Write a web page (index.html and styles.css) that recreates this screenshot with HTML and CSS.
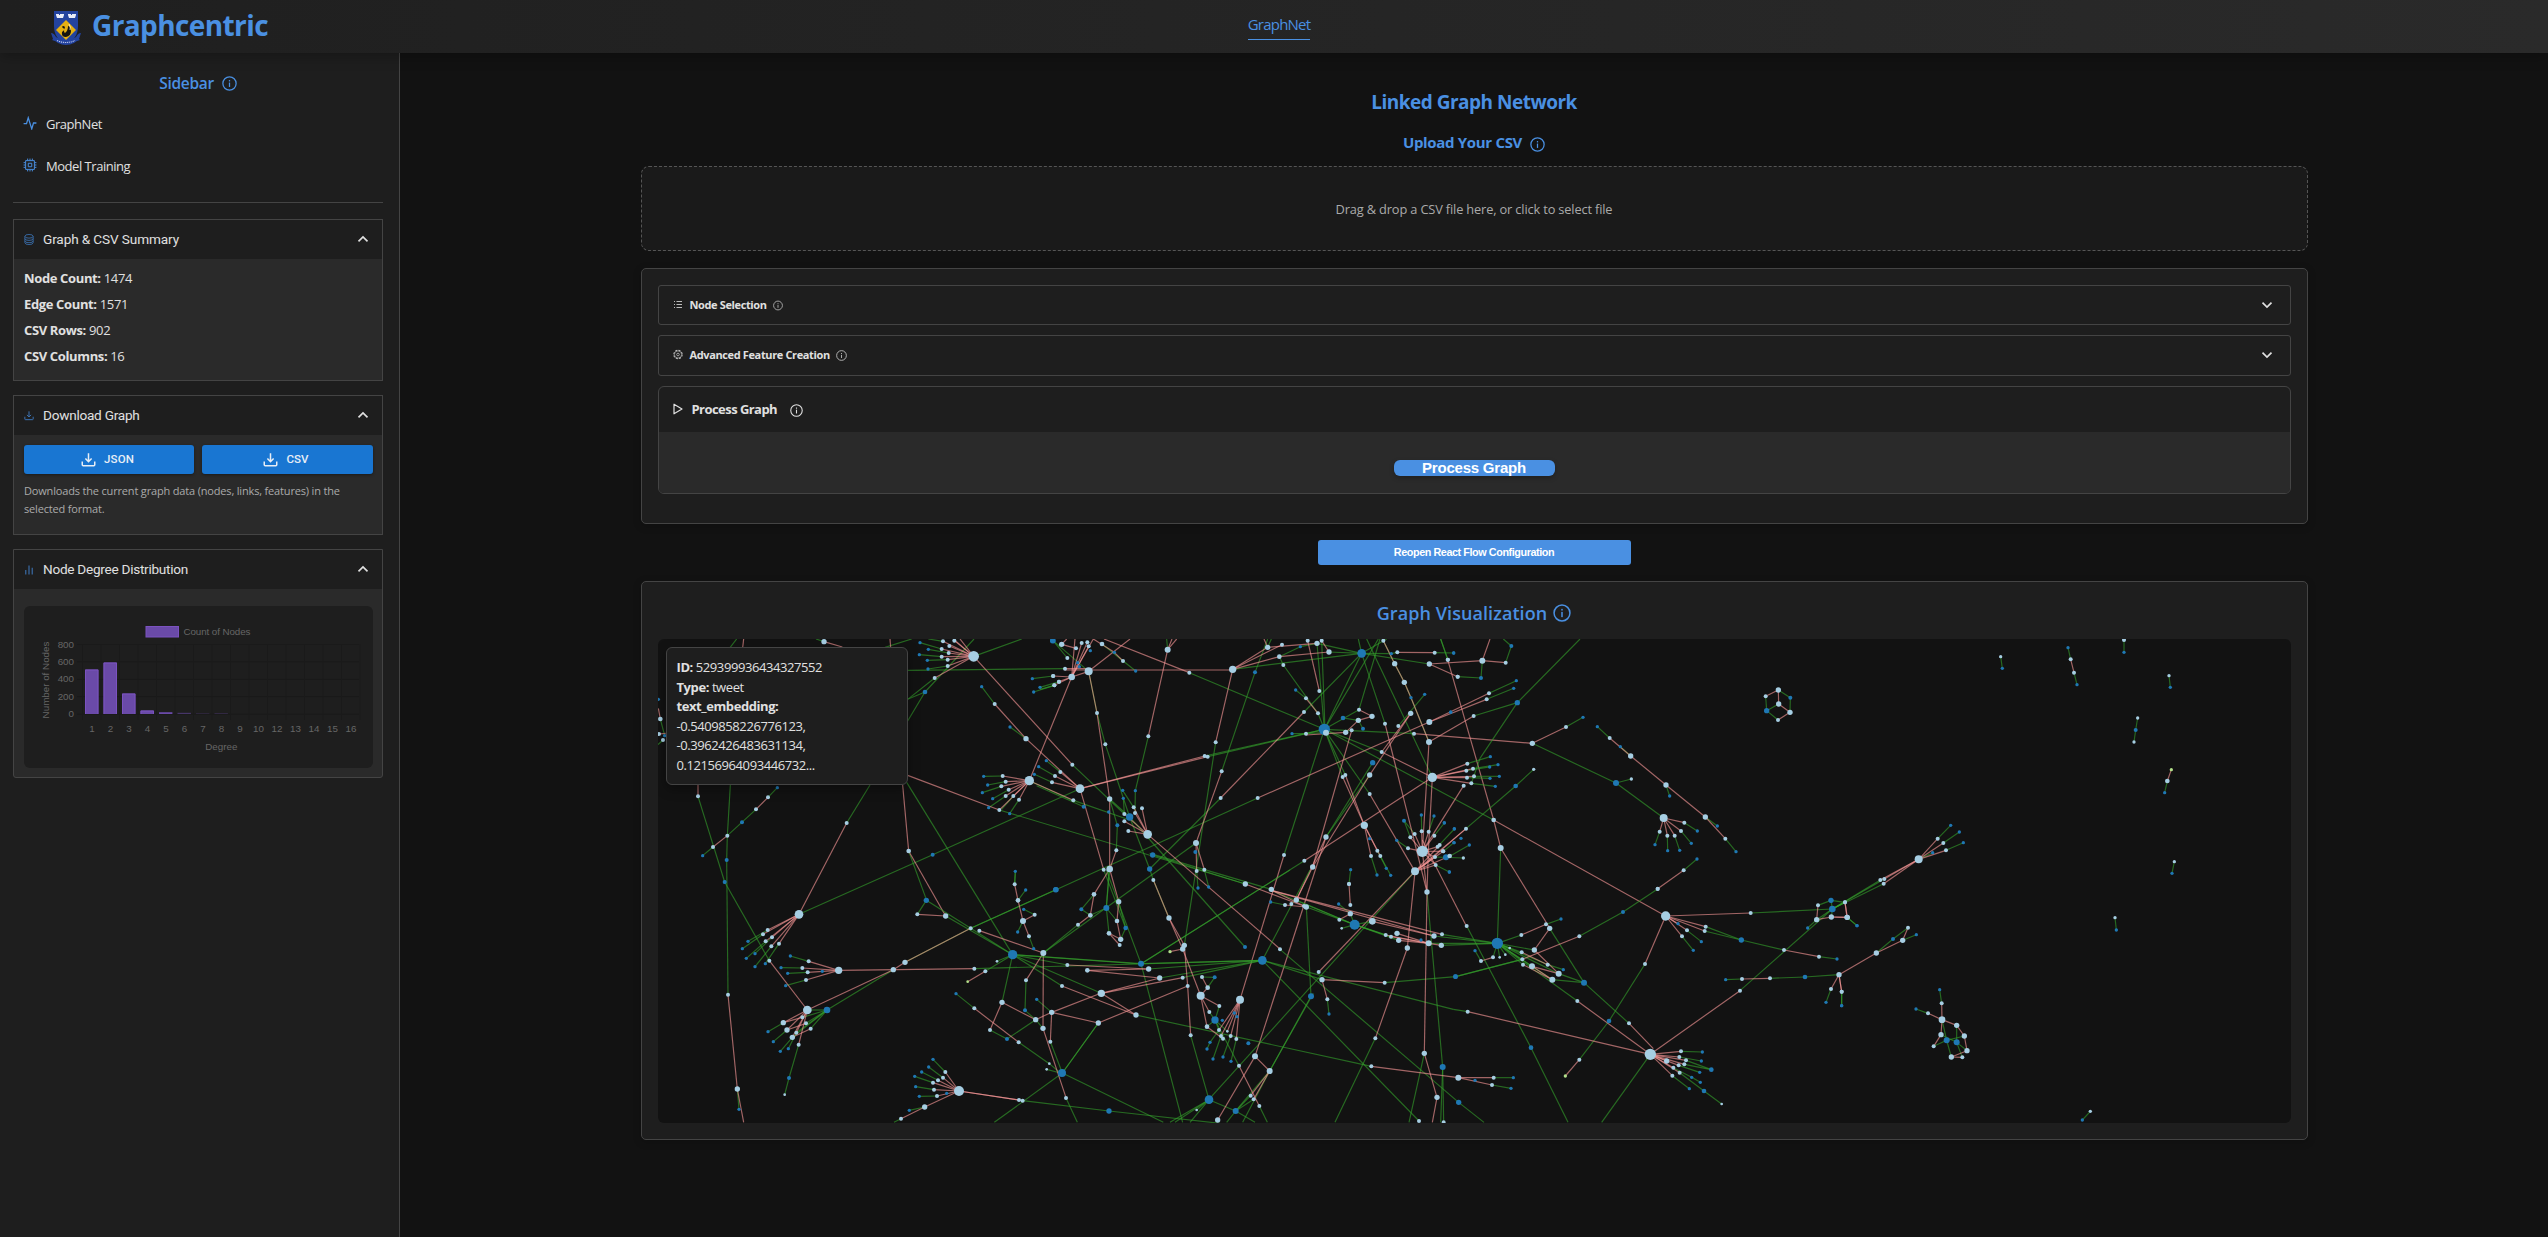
FILE: index.html
```html
<!DOCTYPE html>
<html lang="en">
<head>
<meta charset="utf-8">
<title>Graphcentric</title>
<link rel="stylesheet" href="styles.css">
</head>
<body>
<svg class="defs" aria-hidden="true">
  <symbol id="info" viewBox="0 0 24 24"><circle cx="12" cy="12" r="10.6" fill="none" stroke="currentColor" stroke-width="2"/><rect x="11" y="10.5" width="2" height="7" fill="currentColor"/><rect x="11" y="6.5" width="2" height="2.2" fill="currentColor"/></symbol>
  <symbol id="up" viewBox="0 0 12 8"><path d="M1.5 6.3 6 2l4.500 4.300" fill="none" stroke="currentColor" stroke-width="1.700"/></symbol>
  <symbol id="down" viewBox="0 0 12 8"><path d="M1.500 1.700 6 6l4.500-4.300" fill="none" stroke="currentColor" stroke-width="1.700"/></symbol>
  <symbol id="download" viewBox="0 0 24 24"><path d="M12 2v13M7 10.500l5 5 5-5M2 15v5.500q0 1.500 1.500 1.500h17q1.500 0 1.500-1.500V15" fill="none" stroke="currentColor" stroke-width="2.400"/></symbol>
</svg>
<header class="topbar">
  <div class="brand">
    <svg class="crest" viewBox="0 0 30 35">
      <path d="M3 1h24v15q0 13-12 18Q3 29 3 16z" fill="#23439f"/>
      <path d="M5 4h3v1h1V4h4v1l-1 3H6L5 5zM17 4h3v1h1V4h4v1l-1 3h-6l-1-3z" fill="#e8ecf8"/>
      <path d="M0 23q3 0 5 4 10 7 20 0 2-4 5-4l-2 6 1 1q-4 1-6 3-8 4-16 0-2-2-6-3l1-1z" fill="#23439f"/>
      <path d="M15 10 25 20 15 30 5 20z" fill="#e5b011"/>
      <path d="M14 17q-2-2-3 0l1 1q3 1-1 4-1 5 4 5 5-1 5-6-1-5-3-5 0 5-3 7-2-1 0-6z" fill="#15150f"/>
      <path d="M18 14q2 3 1 6" stroke="#fff" stroke-width=".7" fill="none"/>
      <path d="M6 30.500q9 4 18 0" stroke="#b9c4ea" stroke-width="1.100" stroke-dasharray="1.200 .8" fill="none"/>
    </svg>
    <span class="brand-name">Graphcentric</span>
  </div>
  <a class="nav-link">GraphNet</a>
</header>
<div class="layout">
  <aside class="sidebar">
    <h2 class="side-title"><span>Sidebar</span><svg class="i15"><use href="#info"/></svg></h2>
    <nav class="side-nav">
      <a><svg class="i14" viewBox="0 0 24 24"><path d="M1 13h5L9 3l6 19 3-10h5" fill="none" stroke="currentColor" stroke-width="2.200"/></svg><span>GraphNet</span></a>
      <a><svg class="i14" viewBox="0 0 24 24"><path d="M4.500 4.500h15v15h-15zM9 9h6v6H9zM8 1v3M12 1v3M16 1v3M8 20v3M12 20v3M16 20v3M1 8h3M1 12h3M1 16h3M20 8h3M20 12h3M20 16h3" fill="none" stroke="currentColor" stroke-width="1.700"/></svg><span>Model Training</span></a>
    </nav>
    <hr class="rule">
    <section class="card">
      <div class="card-head"><svg class="i10" viewBox="0 0 20 24"><path d="M1 5v14q0 4 9 4t9-4V5M1 10q0 4 9 4t9-4M1 15q0 4 9 4t9-4M1 5q0-4 9-4t9 4-9 4-9-4z" fill="none" stroke="currentColor" stroke-width="1.800"/></svg><span class="t-summary">Graph &amp; CSV Summary</span><svg class="chev"><use href="#up"/></svg></div>
      <div class="card-body stats">
        <p><b>Node Count:</b> 1474</p><p><b>Edge Count:</b> 1571</p><p><b>CSV Rows:</b> 902</p><p><b>CSV Columns:</b> 16</p>
      </div>
    </section>
    <section class="card">
      <div class="card-head"><svg class="i10"><use href="#download"/></svg><span class="t-download">Download Graph</span><svg class="chev"><use href="#up"/></svg></div>
      <div class="card-body downloads">
        <div class="btn-row">
          <button class="btn"><svg class="i15"><use href="#download"/></svg>JSON</button>
          <button class="btn"><svg class="i15"><use href="#download"/></svg>CSV</button>
        </div>
        <p class="hint">Downloads the current graph data (nodes, links, features) in the<br>selected format.</p>
      </div>
    </section>
    <section class="card degree">
      <div class="card-head"><svg class="i10" viewBox="0 0 20 24"><path d="M3 23V13M10 23V3M17 23V8" stroke="currentColor" stroke-width="2.400"/></svg><span class="t-degree">Node Degree Distribution</span><svg class="chev"><use href="#up"/></svg></div>
      <div class="card-body chart-body">
        <svg class="chart" id="chart" viewBox="24 606 349 162"></svg>
      </div>
    </section>
  </aside>
  <main class="main">
    <h1 class="page-title">Linked Graph Network</h1>
    <h3 class="upload-title"><span>Upload Your CSV</span><svg class="i15"><use href="#info"/></svg></h3>
    <div class="dropzone">Drag &amp; drop a CSV file here, or click to select file</div>
    <section class="panel config">
      <div class="fold"><svg class="i9" viewBox="0 0 18 18"><path d="M1 3h2M1 9h2M1 15h2M6 3h11M6 9h11M6 15h11" stroke="currentColor" stroke-width="2.400"/></svg><span class="t-node">Node Selection</span><svg class="i10 info"><use href="#info"/></svg><svg class="chev"><use href="#down"/></svg></div>
      <div class="fold"><svg class="i11" viewBox="0 0 24 24"><circle cx="12" cy="12" r="10" fill="none" stroke="currentColor" stroke-width="2.600" stroke-dasharray="5 2.850"/><circle cx="12" cy="12" r="8.600" fill="none" stroke="currentColor" stroke-width="1.400"/><circle cx="12" cy="12" r="3.200" fill="none" stroke="currentColor" stroke-width="1.900"/></svg><span class="t-adv">Advanced Feature Creation</span><svg class="i11 info"><use href="#info"/></svg><svg class="chev"><use href="#down"/></svg></div>
      <div class="process">
        <div class="process-head"><svg class="play" viewBox="0 0 10 12"><path d="M1 1.200v9.600L9 6z" fill="none" stroke="currentColor" stroke-width="1.200" stroke-linejoin="round"/></svg><span>Process Graph</span><svg class="i13"><use href="#info"/></svg></div>
        <div class="process-body"><button class="process-btn">Process Graph</button></div>
      </div>
    </section>
    <button class="reopen">Reopen React Flow Configuration</button>
    <section class="panel viz">
      <h3 class="viz-title"><span>Graph Visualization</span><svg class="i18"><use href="#info"/></svg></h3>
      <div class="canvas">
        <svg id="network" viewBox="54 57 4899 1452"></svg>
        <div class="tooltip">
          <p><b>ID:</b> 529399936434327552</p><p><b>Type:</b> tweet</p><p><b>text_embedding:</b></p><p>-0.5409858226776123,</p><p>-0.3962426483631134,</p><p>0.12156964093446732...</p>
        </div>
      </div>
    </section>
  </main>
</div>
<script src="graph.js"></script>
</body>
</html>
```
FILE: styles.css
```css
* { box-sizing: border-box; }
body { margin: 0; height: 1237px; overflow: hidden; background: #121212; color: #e0e0e0; font-family: "Open Sans", "Noto Sans", sans-serif; display: flex; flex-direction: column; }
p, h1, h2, h3 { margin: 0; }
svg { display: block; flex: none; }
button { border: 0; padding: 0; font-family: inherit; }
.defs { position: absolute; width: 0; height: 0; }
.i9 { width: 9px; height: 9px; }
.i10 { width: 10px; height: 11px; }
.i11 { width: 11px; height: 11px; }
.i13 { width: 13px; height: 13px; }
.i14 { width: 14px; height: 14px; }
.i15 { width: 15px; height: 15px; }
.i18 { width: 18px; height: 18px; }
.chev { width: 12px; height: 8px; margin-left: auto; }

.topbar { position: relative; z-index: 2; height: 53px; flex: none; display: grid; grid-template-columns: 1fr auto 1fr; background: linear-gradient(90deg, #1f1f1f, #2a2a2a); box-shadow: 0 4px 12px rgba(0, 0, 0, .25); }
.brand { display: flex; align-items: center; gap: 11px; padding-left: 51px; }
.crest { width: 30px; height: 35px; margin-top: 2px; }
.brand-name { font-size: 28px; font-weight: 700; color: #4a90e2; letter-spacing: -.6px; line-height: 40px; padding-bottom: 3px; }
.nav-link { height: 40px; margin-left: 10px; padding-top: 13px; color: #4a90e2; font-size: 15px; line-height: 22px; letter-spacing: -.78px; border-bottom: 1px solid #4a90e2; }

.layout { flex: 1; display: grid; grid-template-columns: 400px 1fr; }
.sidebar { background: #1e1e1e; border-right: 1px solid #444; padding: 18px 16px 0 13px; }
.side-title { display: flex; justify-content: center; align-items: center; gap: 8px; height: 24px; font-size: 15.500px; font-weight: 600; color: #4a90e2; letter-spacing: -.3px; }
.side-nav { padding: 8px 0 0 10px; }
.side-nav a { display: flex; align-items: center; gap: 9px; height: 42px; font-size: 13px; letter-spacing: -.47px; }
.side-nav svg { color: #4a90e2; margin-top: -2px; }
.rule { margin: 15px 0 16px; border: 0; border-top: 1px solid #444; }
.card { border: 1px solid #444; margin-bottom: 14px; background: #2a2a2a; }
.card-head { height: 39px; display: flex; align-items: center; gap: 9px; padding: 0 13px 1px 10px; background: #1e1e1e; font-family: Roboto, sans-serif; font-size: 13.600px; }
.card-head > svg:first-child { color: #3c72b2; }
.t-summary { letter-spacing: -.12px; }
.t-download { letter-spacing: -.25px; }
.t-degree { letter-spacing: -.27px; }
.stats { height: 121px; padding: 6px 10px; font-size: 13px; line-height: 26px; letter-spacing: -.36px; }
.downloads { height: 99px; padding: 10px 9px 0 10px; }
.btn-row { display: grid; grid-template-columns: 170px 171px; gap: 8px; }
.btn { height: 29px; padding: 0 3px 2px 0; display: flex; align-items: center; justify-content: center; gap: 8px; background: #1976d2; color: #e8eef6; border-radius: 3px; font: 500 11.500px Roboto, sans-serif; letter-spacing: .1px; box-shadow: 0 1px 3px rgba(0, 0, 0, .4); }
.btn svg { margin-top: 2px; }
.hint { margin-top: 8px; color: #aaa; font-size: 11px; line-height: 18px; letter-spacing: -.17px; }
.degree { border-radius: 0 0 3px 3px; }
.chart-body { height: 188px; padding: 17px 9px 9px 10px; }
.chart { width: 349px; height: 162px; background: #1e1e1e; border-radius: 6px; font: 9.800px "Liberation Sans", sans-serif; }
.chart text { fill: #666; }

.main { display: flex; flex-direction: column; align-items: center; padding-top: 34px; }
.page-title { height: 30px; font-size: 19px; line-height: 30px; letter-spacing: -.5px; color: #4a90e2; }
.upload-title { display: flex; align-items: center; gap: 8px; height: 22px; margin-top: 14px; font-size: 15px; letter-spacing: -.32px; color: #4a90e2; }
.upload-title svg { margin-top: 4px; }
.dropzone { width: 1667px; height: 85px; margin-top: 13px; display: grid; place-items: center; border: 1px dashed #555; border-radius: 8px; background: #1a1a1a; color: #aaa; font-size: 12.800px; letter-spacing: -.15px; }
.panel { width: 1667px; border: 1px solid #444; border-radius: 5px; background: #1e1e1e; padding: 16px; box-shadow: 0 2px 8px rgba(0, 0, 0, .2); }
.config { height: 256px; margin-top: 17px; display: flex; flex-direction: column; gap: 10px; }
.fold { height: 40.250px; display: flex; align-items: center; padding: 0 17px 1px 14px; border: 1px solid #444; border-radius: 3px; font-size: 11px; font-weight: 700; letter-spacing: -.37px; }
.fold > svg:first-child { margin-right: 7px; width: 10px; color: #bbb; }
.fold .info { margin: 2px 0 0 6px; color: #bbb; }
.process { border: 1px solid #444; border-radius: 6px; overflow: hidden; }
.process-head { height: 45px; display: flex; align-items: center; padding-left: 14px; font-size: 13px; font-weight: 700; letter-spacing: -.55px; }
.process-head .play { width: 10px; height: 12px; margin-right: 9px; }
.process-head .i13 { margin: 3px 0 0 13px; }
.process-body { height: 61px; padding-top: 28px; background: #2a2a2a; text-align: center; }
.process-btn { display: block; margin: 0 auto; width: 161px; height: 16px; border-radius: 6px; background: #4a90e2; color: #fff; font: 700 15px/16px "Liberation Sans", sans-serif; letter-spacing: -.22px; box-shadow: 0 2px 5px rgba(0, 0, 0, .25); }
.reopen { width: 313px; height: 25px; margin-top: 16px; padding-bottom: 1px; border-radius: 3px; background: #4a90e2; color: #fff; font: 700 10.800px "Liberation Sans", sans-serif; letter-spacing: -.42px; }
.viz { height: 559px; margin-top: 16px; }
.viz-title { height: 29px; margin: 0 0 12px; display: flex; justify-content: center; align-items: center; gap: 6px; font-size: 18px; font-weight: 600; letter-spacing: .08px; color: #4a90e2; }
.canvas { position: relative; width: 1633px; height: 484px; border-radius: 6px; overflow: hidden; background: #121212; }
#network { width: 1633px; height: 484px; }
.tooltip { position: absolute; left: 8px; top: 8px; width: 242px; height: 138px; padding: 10px; background: #1e1e1e; border: 1px solid #444; border-radius: 6px; font-size: 13px; line-height: 19.600px; letter-spacing: -.42px; box-shadow: 0 4px 12px rgba(0, 0, 0, .35); }
.edge { stroke-width: 3.500; stroke-opacity: .62; }
.g { stroke: #33a02c; }
.p { stroke: #fb9a99; }
.l { fill: #a6cee3; }
.b { fill: #1f78b4; }
.y { fill: #b2df8a; }
```
FILE: graph.js
```javascript
const NS = 'http://www.w3.org/2000/svg';
function add(parent, tag, attrs, text) {
  const el = document.createElementNS(NS, tag);
  for (const k in attrs) el.setAttribute(k, attrs[k]);
  if (text !== undefined) el.textContent = text;
  parent.appendChild(el);
}

// Regions of the network. Edges are polylines "x,y x,y"; nodes are "x,y[,radius]".
// "fans" start with a hub that connects to every following point.
const regions = [
{ at: [0, 0],
  g: `290,57 270,83|528,57 552,65|735,82 815,57|803,151 1276,146|803,238 884,174|803,238 855,216 1002,57|803,303 855,216|1001,109 1145,57|840,68 905,87|865,88 926,99|838,104 905,110|862,121 923,119|864,147 923,138|865,57 909,64|1177,176 1240,168|1181,216 1243,196|1200,202 1258,185|1025,200 1064,252|1110,321 1158,356|1031,469 1088,468|1043,495 1097,485|1027,518 1084,499|1058,536 1106,509|1046,563 1097,528|1109,581 1137,539|1085,568 1120,528|1078,570 1816,792|1183,463 1236,487|1196,440 1245,468|1219,422 1261,456|54,374 69,360|61,297 74,347|174,529 254,786 388,1022|412,503 384,532|348,568 262,647|219,681 188,707|271,495 262,647 260,720 264,1124|620,609 690,495|806,693 860,841|800,487 1118,1004|477,883 878,704 1320,506|1124,793 1126,754|1168,482 1300,543`,
  p: `311,57 308,83|552,65 607,81|750,57 752,82|884,174 1001,109 1297,434|1064,252 1158,356 1320,506|1168,482 1295,171|803,466 1078,570|1168,482 1300,541|174,495 174,529|384,532 348,568|262,647 219,681|620,609 477,883|788,495 806,693 917,888|55,265 61,297|57,342 77,340`,
  pf: `1001,109 909,64 943,62 928,78 905,87 926,99 905,110 923,119 923,138 940,57 960,57|1168,482 1088,468 1097,485 1084,499 1106,509 1097,528 1120,528 1137,539 1078,570|1320,506 1236,487 1245,468 1261,456`,
  l: `552,65,8 1001,109,16 909,64 943,62 928,78 905,87 926,99 905,110 923,119 923,138 884,174 1240,168 1243,196 1257,185 1064,252 1158,356,8 1168,482,14 1088,468 1097,485 1084,499 1106,509 1097,528 1120,528 1137,539 1078,570 69,360 61,297,7 57,342 174,529 219,681 384,532 348,568 262,647 620,609 806,693,7 1124,793`,
  b: `840,68 865,88 838,104 862,121 864,147 855,216,7 1177,176 1181,216 1200,202 1025,200 1110,321 1031,469 1043,495 1027,518 1058,536 1046,563 1109,581 1183,463 1196,440 1219,422 74,347 55,238 412,503 306,607,6 188,707 260,720,6 254,786,6 878,704,6 1126,754 1238,62,8` },
{ at: [1200, 0],
  g: `380,57 383,89|0,208 43,196|39,62 82,114|39,62 146,154|448,158 853,328|325,349 286,512|527,367 433,976|578,148 965,100|683,82 694,57|718,110 781,80 831,70 965,100|718,110 730,135 834,280|831,70 853,328|845,62 855,328|867,96 965,100 955,57|965,100 853,328|1015,57 853,328|1040,57 965,100 792,276|965,100 1054,101 1072,97|1184,98 1241,99|965,100 1168,132|965,100 1035,311|1020,57 957,269|980,57 1177,472|1223,119 1202,57|1030,62 1064,131 1093,187 1113,233 1167,366|767,210 798,235|542,534 329,747|468,669 10,999|653,534 48,809 -208,925|755,341 798,341|798,341 853,338|998,428 858,651|989,465 858,651|909,294 955,301|853,328 957,269|969,326 955,301|1012,692 1039,745|993,708 1011,765|1021,708 1052,766|1075,318 1154,223|793,722 303,1032|1145,634 1144,585|1166,635 1182,588|1183,647 1213,609|1111,652 1092,602 1124,642|1193,680 1243,627|1210,694 1242,668|1104,685 1070,661|1187,735 1228,756|1185,711 1270,714|1220,714 1288,675|1125,754 506,1439|97,434 253,582|100,541 269,600|171,279 196,373 269,591|209,537 232,616 229,691|209,537 269,591|281,562 248,511|285,579 286,512|253,582 250,535|269,591 329,747 340,780 387,894|269,591 615,981|338,705 616,792|329,700 694,808|545,454 645,157 683,57|470,753 474,804|493,749 506,801|209,747 199,863|191,749 257,924|927,792 932,749|131,560 -10,497|186,72 287,153|171,279 146,154`,
  p: `80,57 65,73 108,85|75,146 146,146|75,150 578,150|270,57 146,154 171,279 209,537 209,747|192,57 448,158|160,57 223,97 249,123|410,57 383,89 325,349|396,57 383,89|578,148 527,367|578,148 683,82 831,70|578,148 718,110 867,96 845,62|578,148 726,74|683,82 672,57|803,62 838,213|1072,97 1184,98|1168,132 1253,170|1168,132 1327,122|1223,119 1361,600 1382,684|1030,62 1064,131 1093,187 1113,233 1167,366|798,235 834,280|792,276 542,534|798,345 917,337|494,408 120,506|503,410 120,506|957,269 996,289 955,301 917,337|1122,341 1477,370|732,705 600,1139|858,651 769,840|858,651 645,1309|935,331 818,741 769,840|989,465 818,741|916,465 973,616|908,471 973,616|989,522 1125,754|1035,311 1161,816|1112,280 989,465|1025,396 1112,280|1168,306 653,534|1168,306 1340,238|1168,306 1347,220|1167,366 1301,288|1167,366 1147,694|1177,472 1165,694 1161,816|1177,472 793,722|1177,472 1025,396|1125,754 836,1056|1125,754 1102,984|1147,694 1161,816|1147,660 1279,918|120,506 191,749|323,643 720,987|468,669 545,454|229,691 209,747|209,747 162,823|209,747 236,844|340,780 387,894|105,57 95,171`,
  pf: `95,171 146,154 125,69 142,67 146,79 39,168 57,185 43,196 160,57|973,616 1012,692 993,708 1021,708|1147,694 1145,634 1166,635 1183,647 1124,642 1111,652 1104,685 1193,680 1210,694 1185,711 1187,735|1125,754 1187,735 1185,711 1210,694 1199,675 1229,708 1278,626|323,643 281,562 306,565 285,579 253,582 253,604 265,633|468,669 470,753 493,749`,
  gf: `853,328 494,408 503,410 732,705 908,471 916,465 989,522 1025,396 1361,600 1122,341 834,280`,
  l: `65,73,8 108,85 82,114 125,69 142,67 146,79 75,146 39,168 57,185 43,196 146,154,12 95,171,10 186,72,7 249,123 383,89,9 448,158 578,148,11 683,82,8 718,110,7 730,135 726,74 803,62 831,70,8 845,62 867,96,8 838,213 798,235 792,276 834,280 171,279 196,373 325,349 527,367 494,408 503,410 545,454 542,534 653,534 97,434 120,506,13 61,456 45,468 36,487 100,541 209,537,8 281,562 285,579 306,565 253,582 253,604 265,633 323,643,13 229,691 209,747,10 191,749 340,780 468,669,9 470,753 493,749 616,792,8 694,808,8 732,705 793,722 818,741,8 858,651,8 973,616,11 993,708 1021,708 1012,692 927,792 989,522 908,471 916,465 989,465,8 1025,396 1122,341 1075,318 1112,280,8 1035,311 957,269 996,289,8 955,301,8 917,337,8 935,331 798,341 1093,187,8 1064,131,8 1030,62 1072,97 1184,98 1168,132,8 1223,119 1253,170 1168,306,9 1167,366,9 1177,472,14 1147,694,17 1125,754,12 1145,634 1166,635 1183,647 1124,642 1111,652 1104,685 1193,680 1199,675 1210,694 1185,711 1187,735`,
  b: `39,62,8 151,92 113,128 118,140 223,97 287,153 965,100,13 781,80 645,157,6 767,210 756,341 853,328,17 909,294,7 969,326,6 998,428,8 1054,101 1113,233 1154,223 1232,276 1241,99 248,511 286,512 250,535 206,576 269,591,11 232,616,6 131,560,6 338,705,8 329,747,8 466,696,6 474,804 506,801 989,656 1011,765 1039,745 1052,766 932,749 1070,661 1092,602,6 1144,585 1182,588 1213,609 1243,627 1242,668 1228,756`,
  top: `858,338,9` },
{ at: [2400, 0],
  g: `2,57 24,119|190,57 214,78 197,128|127,122 123,174 53,170|147,220 229,182|140,238 221,205|101,288 232,248 420,57|232,248 120,415 94,490|429,292 378,321|82,431 151,410|99,446 174,434|79,452 149,441|102,469 178,469|81,473 150,475|94,490 166,499|281,448 227,498 78,626|277,370 528,489 671,594|528,489 574,477|472,320 509,354|541,380 572,408|678,495 689,528|733,608 772,633|723,633 754,670|704,647 719,691|682,647 683,692|659,635 645,674|796,591 832,618|856,656 888,695|731,751 771,717|182,684 172,970|1015,210 1051,233 1050,277|977,229 980,272 1014,300|980,272 1016,252`,
  p: `150,57 127,122 197,128|277,370 378,321|509,354 572,408 678,495 796,591 856,656|71,497 -53,694|731,751 653,806|161,600 677,888|182,684 329,924|977,229 1015,210 1016,252 1050,277 1014,300|78,626 -53,740`,
  pf: `671,594 733,608 723,633 704,647 682,647 659,635|-23,472 82,431 79,452 99,446 81,473 102,469 94,490`,
  l: `24,119 53,170 127,122,9 197,128 147,220 140,238 101,288 277,370,8 378,321 281,448,5 82,431 79,452 99,446 81,473 102,469 94,490 71,497 509,354 572,408,8 678,495,8 574,477,5 671,594,12 733,608 723,633 704,647 682,647 659,635 796,591,8 856,656 731,751 653,806 78,626 161,600,7 182,684,9 9,694 70,714,5 1015,210,8 977,229 1016,252,8 1050,277,8 1014,300`,
  b: `214,78,6 41,99 123,174,6 229,182 221,205 232,248,8 32,277 429,292 151,410 174,434 149,441 178,469 150,475 166,499 227,498,7 528,489,9 472,320 541,380 689,528 772,633 754,670 719,691 683,692 645,674 832,618 888,695 771,717 1051,233,6 980,272,8 13,608 43,626 63,655 42,668 88,675 18,712,9 28,756`,
  top: `29,708,7` },
{ at: [3600, 0],
  g: `482,110 487,145|684,83 692,118|702,158 711,194|852,60 852,97|987,167 991,202|893,294 887,330 882,366|982,483 974,518|1003,725 996,760|825,893 829,930|293,656 332,616|310,669 358,636|318,691 370,668|236,718 278,698|22,892 51,917|204,923 159,957 109,999|188,961 229,944|5,1115 5,1157|299,1109 305,1150|228,1167 264,1180|306,1199 320,1261 334,1311|281,1279 320,1261 373,1248|350,1216 350,1267 367,1312|303,1244 350,1267 381,1292|751,1474 727,1500`,
  gf: `-23,867 121,780 131,791 133,777 15,847`,
  p: `692,118 702,158|994,449 982,483|15,847 22,892 -26,891|-3,1064 109,999 188,961 204,923|-3,1064 5,1115|305,1150 306,1199|264,1180 306,1199 350,1216 373,1248 381,1292 334,1311 367,1312|306,1199 303,1244 281,1279`,
  pf: `236,718 293,656 310,669 318,691 121,780 133,777 131,791`,
  l: `482,110,5 692,118 702,158 852,60 987,167,5 893,294,5 882,366,5 982,483,7 1003,725,5 825,893,5 236,718,12 293,656 310,669 318,691 121,780 133,777 131,791 15,847 22,892,8 204,923 188,961,8 109,999,8 5,1115 305,1150 264,1180 306,1199,10 350,1216,8 303,1244,8 373,1248,8 381,1292,8 334,1311,8 367,1312 281,1279 751,1474,5`,
  b: `487,145 684,83 711,194 852,97 991,202 887,330,6 974,518 996,760 829,930 332,616 358,636 370,668 278,698 51,917 159,957,6 229,944 5,1157 299,1109 228,1167 320,1261,9 350,1267,9 727,1500`,
  y: `994,449,5` },
{ at: [0, 750],
  g: `383,180 324,214|369,193 307,236|396,202 345,251|377,214 319,265|394,229 345,290|417,221 376,281|832,133 859,91 1118,254 917,138|992,175 1247,59|1003,296 1867,271|1158,331 1155,421 1187,449 1101,507 1050,480|1190,388 1235,427|948,371 1003,415|1136,517 1228,581 1261,609 1220,598|1231,515 1267,609|1187,449 1209,475|1063,757 1267,609 1375,459|561,420 760,299|795,277 992,175|430,458 384,485|441,480 400,515|457,502 421,544|469,488 445,536|476,524 447,624 434,674|292,657 297,718|916,606 879,568|909,623 866,591|894,631 845,606|879,638 824,619|882,659 827,650|891,678 838,679|854,711 808,721|783,746 762,757|1148,692 1407,723 1740,760|1167,199 1181,236|1149,153 1133,186|1184,134 1151,118|1134,91 1157,60|506,274 451,258|487,294 423,293|503,307 443,310|498,330 437,347|1124,43 1126,4`,
  gf: `1118,254 1036,304 1071,274 1086,397 1283,285 1503,282 1266,348 1384,370|561,420 502,420 487,442 498,460 469,488 457,502 512,476`,
  p: `832,133 917,138|596,301 1003,296|388,272 502,420 760,299 795,277 992,175|487,442 430,458|498,460 441,480|512,476 457,502|1018,182 1210,249 1158,331|1210,249 1209,475 1278,683|1124,43 1134,91 1149,153 1167,199|1149,153 1184,134|983,335 1036,304|1050,480 1086,397 1187,449 1235,427 1384,369|1235,427 1231,515|1003,415 1136,517|264,374 292,657 311,757|957,663 1148,692|854,711 783,746`,
  pf: `477,133 383,180 369,193 396,202 377,214 394,229 417,221|596,301 506,274 487,294 503,307 498,330|502,420 430,458 441,480 469,488 457,502 476,524|957,663 916,606 909,623 894,631 879,638 882,659 891,678 854,711 1137,690`,
  l: `477,133,13 383,180 369,193 396,202 377,214 394,229 417,221 388,272 506,274 487,294 503,307 498,330 596,301,11 760,299,8 795,277,8 992,175 1018,182 917,138,8 832,133 1003,296 1036,304 1071,274,4 1134,91,7 1149,153,9 1184,134 1167,199 1210,249,9 1158,331 1086,397,8 1003,415 1136,517 1050,480 1187,449,8 1209,475,8 1235,427,8 1231,515 1228,581,4 1220,598,4 502,420,13 430,458,8 487,442 498,460 441,480,8 469,488 457,502,8 512,476 476,524 434,674,4 264,374 292,657,8 957,663,15 916,606 909,623 894,631 879,638 882,659 891,678 854,711,8 783,746 1137,690 1148,692`,
  b: `254,36 859,91,8 324,214 307,236 319,265 345,251 345,290 376,281 451,258 423,293 443,310 547,304 437,347 561,420,10 384,485 400,515 421,544 445,536 447,624,6 297,718 879,568 866,591 845,606 824,619 827,650 838,679 920,670 808,721 1118,254,14 948,371 1101,507,6 1155,421,6 1190,388 1157,60 1151,118 1133,186 1181,236 1247,59,8 1266,609,12`,
  y: `983,335,4` },
{ at: [1200, 750],
  g: `162,73 124,118 151,136|114,164 10,249|151,136 199,114|199,0 303,281|257,174 236,95|257,174 242,208|303,281 428,757|303,281 -82,254|303,281 750,0|524,322 486,321|524,322 503,353|537,480 510,517 501,537|543,498 519,567|572,498 549,561|589,507 573,574|452,496 507,689 587,723 645,757|667,271 1240,418 1283,425|667,271 1137,753|667,271 810,0|689,603 813,379 799,111|689,603 820,370|689,603 608,757|67,609 370,757|78,684 112,757|67,609 175,459|288,435 994,589|720,238 1256,697 1332,757|1161,66 1208,591 1211,757|1208,591 1202,757|1153,550 1107,757|1006,505 885,757|1034,338 1247,320 1446,268|862,388 867,432|735,105 692,96|896,102 931,131|658,708 682,757|525,450 597,587`,
  gf: `199,114 207,0 207,190 231,153|667,271 326,297 359,324 428,323 303,281 846,329|525,450 508,426 537,480 501,470 538,408 562,484|507,689 390,757 450,757 470,720 405,757|587,723 632,677 641,688 689,603 560,757|944,164 694,61 769,90 799,111 931,131 905,175 997,154 1037,195 1053,200 1076,211|1372,220 1182,198 1206,193 1204,226 1166,220`,
  p: `162,73 151,136 114,164|236,95 231,153 242,208 207,190 239,225|82,285 326,297 142,301 359,324 184,370 428,323|184,370 288,435 66,348|35,427 175,459 443,348|387,144 428,237 482,377|387,144 433,226 443,348 452,496|390,245 428,237|486,321 503,353 482,377 538,408|482,377 508,426|482,377 501,470 549,506|597,587 658,708|533,750 645,559 689,603 632,677|689,603 641,688|616,42 799,111|694,61 799,111|694,61 1182,198|735,105 799,111|694,61 1206,193|997,154 1182,198|927,42 931,105|898,149 931,131|1034,338 846,329 862,388|1102,234 1006,505|994,589 1255,623|1161,66 1153,550 1191,682 1177,757`,
  pf: `600,389 537,480 543,498 562,484 572,498 589,507|1166,220 1071,190 1076,211 1053,200 1037,195 1204,226`,
  l: `162,73,7 151,136,7 114,164 236,95,8 231,153,7 207,190,7 242,208,8 239,225 82,285 142,301,7 326,297,8 359,324,8 428,323 443,348 184,370,11 66,348 288,435,8 175,459,8 387,144,8 433,226,8 428,237,8 486,321 503,353,7 482,377,12 508,426 538,408 501,470,7 537,480 543,498 549,506 562,484,4 572,498 589,507 452,496 600,389,12 597,587 645,559,9 689,603,9 632,677 641,688 658,708 533,750,8 470,720,4 78,684 769,90,8 754,102 735,105 792,108 799,111,8 927,42 931,105 931,131,8 898,149 905,175,4 997,154,10 1037,195 1053,200 1071,190,8 1076,211,8 1166,220,9 1182,198,8 1206,193 1204,226,8 1102,234,8 1161,66,8 836,306 846,329,8 862,388 1034,338 720,238 1006,505 994,589 1153,550,8 1191,682,8 1137,753 1211,757 1255,623,9`,
  b: `48,59,8 124,118,6 199,114,9 257,174,7 303,281,9 615,231,6 667,271,13 524,322,6 525,450,11 583,429 591,440 547,451 510,517 501,537 519,567 549,561 573,574 625,520,6 813,379,9 867,432 944,164,15 896,102 692,96 1143,210 507,689,13 587,723,9 207,723,8 1208,591,9 1256,697,8 1247,320,7`,
  y: `390,245,5` },
{ at: [2400, 750],
  g: `80,168 273,533 384,757|318,163 363,147|329,175 432,338 567,460|105,242 123,273|412,393 172,220|337,329 432,338 356,311|323,284 370,299|418,199 549,126 653,57|247,268 47,320|932,129 1177,117 900,362|797,170 904,210 1032,240|794,183 904,210|741,181 784,215|726,199 760,241|615,282 507,453 418,569|631,553 485,757|857,329 906,327|990,325 1095,321 1197,314|1173,357 1158,397|1205,365 1205,407|1137,260 1191,267|723,544 787,546|718,561 784,573|738,571 814,599 733,583|716,586 779,607|700,593 755,622 781,637|697,617 748,656|719,608 792,663 845,702|161,623 220,623|156,645 213,655|1130,149 1103,174|1221,142 1251,167|1134,106 1173,91 1215,97`,
  gf: `172,220 244,195 283,240 245,247 249,284 276,289 209,234 196,254 179,262 159,262 323,284 356,311 337,329|1177,117 1173,91 1174,141 1215,97 1130,149`,
  p: `244,195 318,163|329,175 283,240 356,311|245,247 323,284|276,289 356,311|249,284 337,329|247,268 418,199|276,289 337,329|123,273 159,262|412,393 631,553|567,460 640,536|932,129 677,138|615,282 677,138|677,138 714,161|376,618 418,569|631,553 900,362|83,425 631,553|906,327 990,325|1173,357 1197,314 1205,365|1032,240 1137,260|55,623 161,623|55,623 156,645|1134,106 1130,149 1174,141 1221,142 1215,97`,
  pf: `677,138 797,170 794,183 741,181 726,199|631,553 723,544 718,561 738,571 733,583 716,586 680,573 700,593 719,608 697,617`,
  l: `80,168 318,163 329,175,8 244,195 283,240,8 245,247 247,268 249,284 276,289,9 323,284 356,311,9 337,329,9 209,234,4 196,254,4 179,262,4 159,262 123,273 412,393 567,460 418,199 653,57 677,138,14 932,129 797,170 794,183 741,181 726,199 615,282 418,569 631,553,17 900,362 906,327 990,325 1197,314,8 1173,357 1205,365 1032,240 1137,260 83,425 723,544 718,561 738,571 733,583 716,586 680,573,8 700,593 719,608 697,617 845,702,4 161,623 156,645 1134,106 1130,149,8 1174,141,8 1221,142,8 1215,97`,
  b: `363,147 172,220,17 105,242 370,299 432,338,9 46,320,7 549,126,6 714,161 784,215 760,241 904,210,8 507,453,7 273,533,7 857,329 1095,321,7 1158,397 1205,407 1191,267 1173,91,8 1177,117,10 1103,174 1251,167 787,546 784,573 814,599,7 779,607 755,622 781,637 748,656 792,663,7 220,623 213,655 105,631`,
  y: `376,618,5` }
];

const net = document.getElementById('network');
const parse = s => s.trim().split(/\s+/).map(q => q.split(',').map(Number));
function edge(c, o, a, b) {
  add(net, 'line', { class: 'edge ' + c, x1: o[0] + a[0], y1: o[1] + a[1], x2: o[0] + b[0], y2: o[1] + b[1] });
}
for (const r of regions) {
  for (const c of ['g', 'p']) {
    for (const s of (r[c] || '').split('|').filter(Boolean)) {
      const pts = parse(s);
      for (let i = 1; i < pts.length; i++) edge(c, r.at, pts[i - 1], pts[i]);
    }
    for (const s of (r[c + 'f'] || '').split('|').filter(Boolean)) {
      const [hub, ...rest] = parse(s);
      rest.forEach(q => edge(c, r.at, hub, q));
    }
  }
}
for (const r of regions) {
  for (const c of ['b', 'l', 'y', 'top']) {
    if (!r[c]) continue;
    for (const [x, y, n] of parse(r[c])) add(net, 'circle', { class: c === 'top' ? 'l' : c, cx: r.at[0] + x, cy: r.at[1] + y, r: n || (c === 'b' ? 5 : 6) });
  }
}

// Node degree histogram
const chart = document.getElementById('chart');
for (let i = 0; i < 5; i++) add(chart, 'rect', { x: 77, y: 644 + i * 17.4, width: 282, height: 1, fill: '#1a1a1a' });
for (let i = 0; i < 16; i++) add(chart, 'rect', { x: 82 + i * 18.5, y: 644, width: 1, height: 76, fill: '#1a1a1a' });
[44.5, 51.5, 20.5, 3.5, 1.8, 1.2, .4, .5].forEach((h, i) => {
  const x = 85 + i * 18.5;
  add(chart, 'rect', { x, y: 714 - h, width: 13.4, height: h, fill: '#6a4aa8', opacity: i > 4 ? .55 : 1 });
  if (h > 3) add(chart, 'path', { d: `M${x + .5} 714V${714.5 - h}H${x + 13}V714`, fill: 'none', stroke: '#7b52c0', 'stroke-width': 1 });
});
add(chart, 'rect', { x: 146, y: 626.5, width: 32.5, height: 10.5, fill: '#6a4aa8', stroke: '#7b52c0' });
add(chart, 'text', { x: 183.5, y: 635.3, textLength: 67 }, 'Count of Nodes');
['800', '600', '400', '200', '0'].forEach((t, i) => add(chart, 'text', { x: 74, y: 647.5 + i * 17.4, 'text-anchor': 'end' }, t));
[1, 2, 3, 4, 5, 6, 7, 8, 9, 10, 12, 13, 14, 15, 16].forEach((t, i) => add(chart, 'text', { x: 92 + i * 18.5, y: 732, 'text-anchor': 'middle' }, t));
add(chart, 'text', { x: 221.3, y: 749.5, 'text-anchor': 'middle' }, 'Degree');
add(chart, 'text', { transform: 'translate(49 680) rotate(-90)', 'text-anchor': 'middle' }, 'Number of Nodes');
```
